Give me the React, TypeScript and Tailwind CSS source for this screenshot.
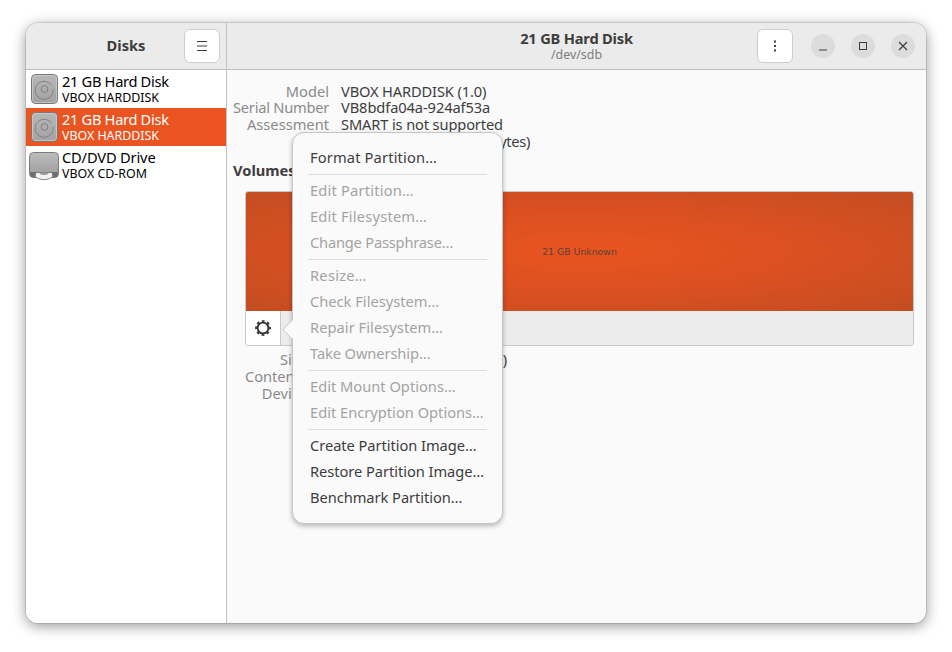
const font = { fontFamily: '"Noto Sans", sans-serif' };

function HardDisk() {
  return (
    <svg width="28" height="31" viewBox="0 0 28 31" className="shrink-0">
      <defs>
        <linearGradient id="hd" x1="0" y1="0" x2="0" y2="1">
          <stop offset="0" stopColor="#b8b8b8" />
          <stop offset="1" stopColor="#a2a2a2" />
        </linearGradient>
      </defs>
      <rect x="0.5" y="0.5" width="26" height="29" rx="4" fill="url(#hd)" stroke="#777" />
      <rect x="1.5" y="1.5" width="24" height="27" rx="3" fill="none" stroke="#d0d0d0" strokeOpacity="0.7" />
      <path d="M20.5 11.2A9 9 0 1 0 22 15" fill="none" stroke="#808080" strokeWidth="1" />
      <circle cx="13.5" cy="15" r="3.4" fill="none" stroke="#808080" strokeWidth="1" />
    </svg>
  );
}

function CdDrive() {
  return (
    <svg width="30" height="31" viewBox="0 0 30 31" className="mt-[5px] shrink-0">
      <defs>
        <linearGradient id="cd" x1="0" y1="0" x2="0" y2="1">
          <stop offset="0" stopColor="#bdbdbd" />
          <stop offset="1" stopColor="#9a9a9a" />
        </linearGradient>
      </defs>
      <rect x="0.5" y="0.5" width="29" height="25" rx="4" fill="url(#cd)" stroke="#7b7b7b" />
      <path d="M1 20h28v2.5a3 3 0 0 1-3 3H4a3 3 0 0 1-3-3z" fill="#6f6f6f" />
      <path d="M7 20.5h16l1 4a14 14 0 0 1-18 0z" fill="#f2f2f2" stroke="#6f6f6f" strokeWidth="0.8" />
      <path d="M10.5 20.5h9a4.5 2.5 0 0 1-9 0z" fill="#9a9a9a" />
    </svg>
  );
}

function DiskRow({ name, sub, selected, cd }: { name: string; sub: string; selected?: boolean; cd?: boolean }) {
  return (
    <div className={`flex h-[38px] items-center ${selected ? "bg-[#e95420] text-white" : "text-black"} ${cd ? "pl-[3px] gap-[3px]" : "pl-[5px] gap-[3px]"}`}>
      {cd ? <CdDrive /> : <HardDisk />}
      <div className="flex flex-col">
        <div className={`text-[14.67px] leading-[18px] ${cd ? "tracking-[-0.17px]" : "tracking-[-0.33px]"}`}>{name}</div>
        <div className="text-[12.4px] leading-[16px]">{sub}</div>
      </div>
    </div>
  );
}

function Info({ label, value, t, lt }: { label: string; value: string; t?: string; lt?: string }) {
  return (
    <>
      <div className={`justify-self-end whitespace-nowrap text-right text-[#8a8a8a] ${lt ?? ""}`}>{label}</div>
      <div className={`whitespace-nowrap text-[#3d3d3d] ${t ?? ""}`}>{value}</div>
    </>
  );
}

function MenuItem({ children, off, t }: { children: string; off?: boolean; t?: string }) {
  return (
    <div className={`flex h-[26px] items-center pb-[2px] pl-[17px] whitespace-nowrap ${off ? "text-[#a3a3a3]" : "text-[#3d3d3d]"} ${t ?? ""}`}>
      {children}
    </div>
  );
}

function Sep() {
  return <div className="mx-[15px] my-[3px] h-px bg-[#dedede]" />;
}

function RoundBtn({ children }: { children: React.ReactNode }) {
  return (
    <div className="flex h-6 w-6 items-center justify-center rounded-full bg-[#dcdcdc]">
      <svg width="16" height="16" viewBox="0 0 16 16" fill="none" stroke="#3d3d3d" strokeWidth="1">
        {children}
      </svg>
    </div>
  );
}

export default function App() {
  return (
    <div className="h-[652px] w-[952px] overflow-hidden bg-white pl-[26px] pt-[23px]" style={font}>
      <div className="relative flex h-[600px] w-[900px] flex-col overflow-hidden rounded-t-[13px] rounded-b-[12px] bg-[#fafafa] shadow-[0_3px_14px_rgba(0,0,0,0.42),0_0_0_1px_rgba(0,0,0,0.1)] text-[14.67px]">
        <div className="flex h-[47px] shrink-0 border-b border-[#bdbdbd] bg-[#ebebeb]">
          <div className="relative flex w-[201px] shrink-0 items-center justify-center border-r border-[#c4c4c4] pb-[2px]">
            <span className="font-bold text-[#3d3d3d]">Disks</span>
            <div className="absolute left-[158px] top-[6px] flex h-[34px] w-[36px] items-center justify-center rounded-[6px] border border-[#cdcdcd] bg-white">
              <svg width="16" height="16" viewBox="0 0 16 16" stroke="#3d3d3d" strokeWidth="1">
                <path d="M3 3.5h10M3 8h10M3 12.5h10" />
              </svg>
            </div>
          </div>
          <div className="relative flex flex-1 flex-col items-center justify-center">
            <div className="font-bold leading-[17px] tracking-[-0.2px] text-[#3d3d3d]">21 GB Hard Disk</div>
            <div className="text-[12.4px] leading-[15px] text-[#7d7d7d]">/dev/sdb</div>
            <div className="absolute left-[530px] top-[6px] flex h-[34px] w-[36px] items-center justify-center rounded-[6px] border border-[#cdcdcd] bg-white">
              <svg width="16" height="16" viewBox="0 0 16 16" fill="#3d3d3d">
                <rect x="7" y="2.5" width="2" height="2" />
                <rect x="7" y="7" width="2" height="2" />
                <rect x="7" y="11.5" width="2" height="2" />
              </svg>
            </div>
            <div className="absolute left-[584px] top-[11px] flex gap-4">
              <RoundBtn><path d="M4 12h8" /></RoundBtn>
              <RoundBtn><rect x="4.5" y="4.5" width="7" height="7" /></RoundBtn>
              <RoundBtn><path d="M4 4l8 8M12 4l-8 8" strokeWidth="1.2" /></RoundBtn>
            </div>
          </div>
        </div>

        <div className="flex min-h-0 flex-1">
          <div className="w-[201px] shrink-0 border-r border-[#c4c4c4] bg-white">
            <DiskRow name="21 GB Hard Disk" sub="VBOX HARDDISK" />
            <DiskRow name="21 GB Hard Disk" sub="VBOX HARDDISK" selected />
            <DiskRow name="CD/DVD Drive" sub="VBOX CD-ROM" cd />
          </div>
          <div className="flex-1 pl-[6px] pr-[12px] pt-[13px] leading-[17px]">
            <div className="grid grid-cols-[96px_1fr] grid-rows-[16px_17px_17px_17px] gap-x-[12px]">
              <Info label="Model" value="VBOX HARDDISK (1.0)" t="tracking-[-0.15px]" />
              <Info label="Serial Number" value="VB8bdfa04a-924af53a" t="tracking-[-0.1px]" lt="tracking-[-0.25px]" />
              <Info label="Assessment" value="SMART is not supported" t="tracking-[-0.14px]" />
              <Info label="Size" value="21 GB (21,474,836,480 bytes)" t="tracking-[-0.32px]" />
            </div>
            <div className="mt-[12px] font-bold text-[#3d3d3d]">Volumes</div>
            <div className="ml-[12px] mt-[12px] flex h-[155px] flex-col overflow-hidden rounded-[3px] border border-[#c9c9c9]">
              <div className="flex h-[119px] items-center justify-center bg-[radial-gradient(ellipse_at_center,#e95420_0%,#dc5021_45%,#c34d22_100%)] text-[9.33px] text-[#59403a]" style={{ fontFamily: '"DejaVu Sans", sans-serif' }}>
                21 GB Unknown
              </div>
              <div className="flex flex-1 bg-[#ececec]">
                <div className="flex w-[35px] items-center justify-center border-r border-[#c9c9c9] bg-white">
                  <svg width="18" height="18" viewBox="0 0 18 18" fill="none" stroke="#2e2e2e">
                    <circle cx="9" cy="9" r="5.4" strokeWidth="1.8" />
                    <circle cx="9" cy="9" r="7" strokeWidth="1.7" strokeDasharray="2.8 2.7" strokeDashoffset="1.4" />
                  </svg>
                </div>
              </div>
            </div>
            <div className="mt-[5px] grid grid-cols-[73px_1fr] gap-x-[3px] pl-[1px]">
              <Info label="Size" value="21 GB — 21 GB free (100.0%)" />
              <Info label="Contents" value="Unknown" />
              <Info label="Device" value="/dev/sdb1" />
            </div>
          </div>
        </div>

        <div className="absolute left-[266px] top-[109px] w-[211px] rounded-[12px] border border-[#c6c6c6] bg-[#fafafa] pb-[12px] pt-[12px] shadow-[0_2px_5px_rgba(0,0,0,0.28)]">
          <div className="absolute -left-[8px] top-[189px] h-[15px] w-[15px] rotate-45 rounded-[2px] border-b border-l border-[#c6c6c6] bg-[#fafafa]" />
          <div className="relative">
            <MenuItem t="tracking-[0.15px]">Format Partition…</MenuItem>
            <Sep />
            <MenuItem off t="tracking-[0.2px]">Edit Partition…</MenuItem>
            <MenuItem off t="tracking-[0.2px]">Edit Filesystem…</MenuItem>
            <MenuItem off t="tracking-[-0.2px]">Change Passphrase…</MenuItem>
            <Sep />
            <MenuItem off t="tracking-[0.25px]">Resize…</MenuItem>
            <MenuItem off>Check Filesystem…</MenuItem>
            <MenuItem off t="tracking-[0.05px]">Repair Filesystem…</MenuItem>
            <MenuItem off t="tracking-[-0.1px]">Take Ownership…</MenuItem>
            <Sep />
            <MenuItem off>Edit Mount Options…</MenuItem>
            <MenuItem off>Edit Encryption Options…</MenuItem>
            <Sep />
            <MenuItem t="tracking-[-0.05px]">Create Partition Image…</MenuItem>
            <MenuItem t="tracking-[-0.05px]">Restore Partition Image…</MenuItem>
            <MenuItem t="tracking-[-0.05px]">Benchmark Partition…</MenuItem>
          </div>
        </div>
      </div>
    </div>
  );
}
